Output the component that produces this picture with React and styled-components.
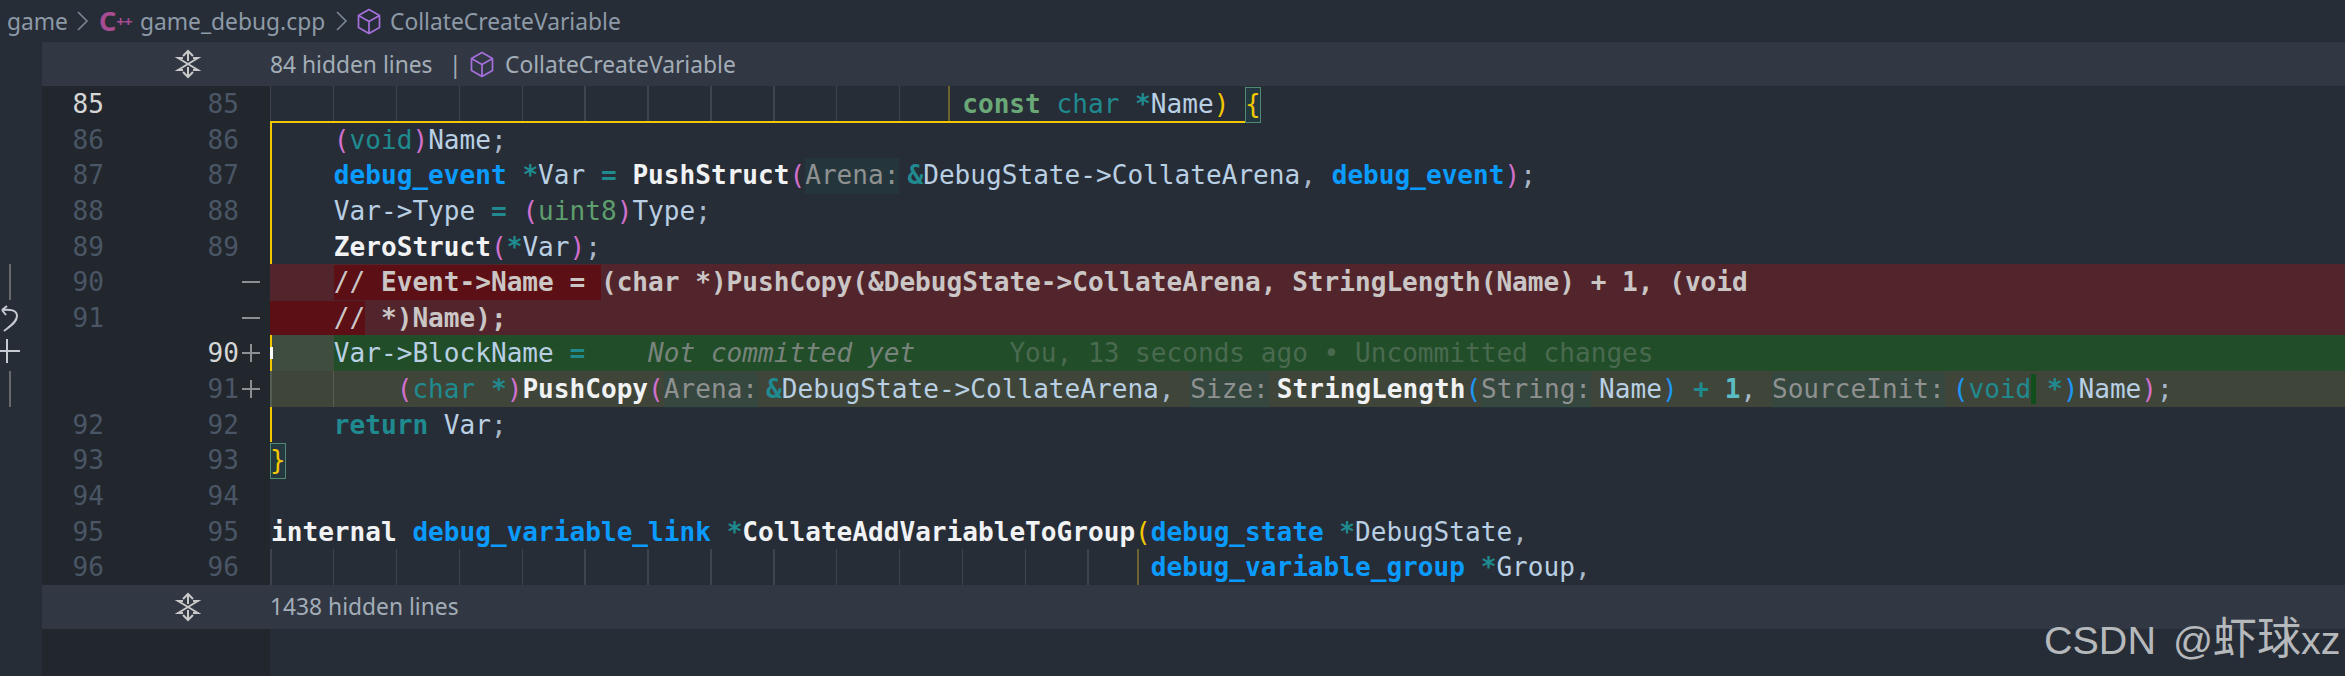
import React from "react";
import styled, { createGlobalStyle } from "styled-components";

const Global = createGlobalStyle`
  html, body { margin: 0; padding: 0; background: #272d36; }
  #root { width: 2345px; height: 676px; }
`;

const CHAR = 15.72;
const STEP = CHAR * 4;
const ROW = 35.64;
const MONO = `"DejaVu Sans Mono", "Liberation Mono", monospace`;
const SANS = `"Noto Sans", "Open Sans", sans-serif`;

const Page = styled.div`
  position: relative;
  width: 2345px;
  height: 676px;
  overflow: hidden;
  display: flex;
  flex-direction: column;
  background: #272d36;
`;

const Breadcrumb = styled.nav`
  height: 42px;
  display: flex;
  align-items: center;
  padding-left: 7px;
  font: 400 22.8px ${SANS};
  color: #8d9aa8;
  white-space: pre;
`;
const Crumb = styled.span`
  display: inline-block;
  width: ${(p) => p.$w}px;
`;
const Chev = styled.svg`
  width: 12px;
  height: 22px;
  margin: 0 ${(p) => p.$r}px 0 ${(p) => p.$l}px;
  fill: none;
  stroke: #7a8797;
  stroke-width: 1.6;
`;
const CppIcon = styled.span`
  display: inline-block;
  width: 41px;
  color: #a74b93;
  font: 700 27px ${SANS};
  line-height: 42px;
`;
const CppPlus = styled.span`
  font-size: 15px;
  vertical-align: 4px;
  letter-spacing: -1px;
`;
const Cube = styled.svg`
  width: 24px;
  height: 27px;
  margin-right: ${(p) => p.$r}px;
  fill: none;
  stroke: #a56fdc;
  stroke-width: 1.7;
  stroke-linejoin: round;
  flex: none;
`;

const FoldBar = styled.div`
  height: 44px;
  display: flex;
  align-items: center;
`;
const FoldBody = styled.div`
  flex: 1;
  margin-left: 42px;
  height: 44px;
  background: #323843;
  display: flex;
  align-items: center;
  font: 400 22.8px ${SANS};
  color: #a3adb8;
  white-space: pre;
`;
const FoldGutter = styled.div`
  width: 228px;
  padding-left: 133px;
  box-sizing: border-box;
  flex: none;
  display: flex;
`;
const FoldIcon = styled.svg`
  width: 26px;
  height: 30px;
  fill: none;
  stroke: #c9c9c9;
  stroke-width: 2;
`;
const FoldLabel = styled.span`
  display: inline-block;
  width: ${(p) => p.$w}px;
`;

const Lines = styled.div`
  display: flex;
  flex-direction: column;
`;
const RowBox = styled.div`
  height: ${ROW}px;
  display: flex;
  flex: none;
`;
const Rail = styled.div`
  width: 42px;
  flex: none;
  display: flex;
  align-items: center;
`;
const RailBar = styled.span`
  width: 2px;
  height: 100%;
  margin-left: 9px;
  background: #68696b;
`;
const RailIcon = styled.svg`
  width: 20px;
  height: 28px;
  fill: none;
  stroke: #c6cbd1;
  stroke-width: 2;
`;
const Gutter = styled.div`
  width: 228px;
  flex: none;
  display: grid;
  grid-template-columns: 62px 135px 31px;
  background: #22262d;
  font: 400 26.1px/${ROW}px ${MONO};
  color: #4a5666;
  text-align: right;
`;
const Num = styled.span`
  color: ${(p) => (p.$on ? "#d5d6d6" : "#4a5666")};
  position: relative;
  top: 1px;
`;
const Sign = styled.span`
  display: flex;
  align-items: center;
  padding-left: 2px;
`;
const SignIcon = styled.svg`
  width: 20px;
  height: 20px;
  fill: none;
  stroke: #8d8f92;
  stroke-width: 2;
`;

const backgrounds = {
  none: "transparent",
  removed: "#52252c",
  added: "#214d29",
  changed: "#3f4539",
};

const Code = styled.div`
  position: relative;
  flex: 1;
  min-width: 0;
  padding-left: 1px;
  font: 400 26.1px/${ROW}px ${MONO};
  color: #b9cfe3;
  white-space: pre;
  background: ${(p) => backgrounds[p.$bg || "none"]};
  box-shadow: ${(p) => (p.$scope ? "inset 2px 0 0 #f2c700" : "none")};
`;
const Guides = styled.span`
  position: absolute;
  left: 0;
  top: 0;
  bottom: 0;
  width: ${(p) => p.$n * STEP}px;
  background: repeating-linear-gradient(90deg, ${(p) => p.$color || "#3d444e"} 0 1.5px, transparent 1.5px ${STEP}px);
`;
const ScopeGuide = styled.span`
  position: absolute;
  left: ${(p) => p.$x}px;
  top: 0;
  bottom: 0;
  width: 1.5px;
  background: #6c6330;
`;
const ScopeTop = styled.span`
  position: absolute;
  left: 0;
  bottom: -1px;
  width: 977px;
  height: 2px;
  background: #f2c700;
`;
const AddedMargin = styled.span`
  position: absolute;
  left: 0;
  top: 0;
  bottom: 0;
  width: ${STEP + 1}px;
  background: #3f4d3f;
  box-shadow: inset 2px 0 0 #f2c700;
`;
const Caret = styled.span`
  position: absolute;
  left: 0;
  top: 12px;
  height: 12px;
  width: 3px;
  background: #fff;
`;
const LineText = styled.span`
  position: relative;
  top: 1px;
`;
const Dark = styled.span`
  background: #5c0f14;
  display: inline-block;
  ${(p) => p.$flush && "margin-left: -1px; padding-left: 1px;"}
`;
const Removed = styled.span`
  font-weight: 700;
  color: #cbc6c6;
`;
const Slash = styled.span`
  font-weight: 400;
`;
const Fn = styled.span`
  font-weight: 700;
  color: #f1f2f4;
`;
const Ty = styled.span`
  font-weight: 700;
  color: #0a9bff;
`;
const Kw = styled.span`
  font-weight: 700;
  color: ${(p) => (p.$green ? "#6aa878" : "#1f8a8f")};
`;
const Prim = styled.span`
  color: ${(p) => (p.$green ? "#5d9e6c" : "#1f8a8f")};
`;
const Op = styled.span`
  font-weight: 700;
  color: ${(p) => (p.$bright ? "#5cbcc4" : "#1f8a8f")};
`;
const Par = styled.span`
  color: ${(p) => ({ pink: "#d070cc", yellow: "#f2c700", blue: "#1e96f5" }[p.$c])};
`;
const Punct = styled.span`
  color: #a9b9c9;
`;
const Hint = styled.span`
  display: inline-block;
  margin-right: 8px;
  background: rgba(30, 75, 75, 0.3);
  color: #8f9090;
`;
const Match = styled.span`
  display: inline-block;
  vertical-align: top;
  height: ${ROW}px;
  box-sizing: border-box;
  box-shadow: inset 0 0 0 1px #4f8a72;
  background: #23383f;
  color: #f2c700;
  margin-left: ${(p) => p.$shift || 0}px;
`;
const Gap = styled.span`
  background: linear-gradient(90deg, #0e4f1c 5px, transparent 5px);
`;
const Ghost = styled.span`
  font-style: italic;
  color: #77837b;
`;
const Blame = styled.span`
  color: #4a6a50;
`;
const Rest = styled.div`
  flex: 1;
  display: flex;
`;
const RestRail = styled.div`
  width: 42px;
`;
const RestGutter = styled.div`
  width: 228px;
  background: #22262d;
`;
const Watermark = styled.div`
  position: absolute;
  left: 2044px;
  top: 617px;
  font: 400 39.5px/1 "Liberation Sans", "Noto Sans CJK SC", sans-serif;
  word-spacing: 6px;
  color: #b6b9bc;
  white-space: pre;
`;
const WatermarkCjk = styled.span`
  font-size: 44px;
`;

const Chevron = ({ l, r }) => (
  <Chev $l={l} $r={r} viewBox="0 0 12 22">
    <polyline points="1,2 10,11 1,20" />
  </Chev>
);
const CubeIcon = ({ r }) => (
  <Cube $r={r} viewBox="0 0 24 27">
    <path d="M12 1.5 L22.5 7.5 V19.5 L12 25.5 L1.5 19.5 V7.5 Z" />
    <path d="M1.5 7.5 L12 13.5 L22.5 7.5 M12 13.5 V25.5" />
  </Cube>
);
const UnfoldIcon = () => (
  <FoldIcon viewBox="0 0 26 30">
    <path d="M8 7 L13 2 L18 7 M13 2 V12 M8 23 L13 28 L18 23 M13 28 V18" />
    <path d="M8 9 H3 L23 21 H18 M18 9 H23 L3 21 H8" />
  </FoldIcon>
);
const Fold = ({ children }) => (
  <FoldBar>
    <FoldBody>
      <FoldGutter>
        <UnfoldIcon />
      </FoldGutter>
      {children}
    </FoldBody>
  </FoldBar>
);

const UndoIcon = () => (
  <RailIcon viewBox="0 0 20 28" style={{ marginTop: 2 }}>
    <path d="M4 26 C10 21 17 17 17 11 C17 5 10 4 2 5 M2 5 L7 1 M2 5 L6 10" />
  </RailIcon>
);
const PlusIcon = () => (
  <RailIcon viewBox="0 0 20 28" style={{ marginTop: -4 }}>
    <path d="M0 14 H20 M7 2 V26" />
  </RailIcon>
);
const Minus = () => (
  <SignIcon viewBox="0 0 20 20">
    <path d="M1 10 H19" />
  </SignIcon>
);
const Plus = () => (
  <SignIcon viewBox="0 0 20 20">
    <path d="M1 10 H19 M10 1 V19" />
  </SignIcon>
);

const Row = ({ rail, old, next, sign, oldOn, nextOn, bg, scope, children, over }) => (
  <RowBox>
    <Rail>{rail}</Rail>
    <Gutter>
      <Num $on={oldOn}>{old}</Num>
      <Num $on={nextOn}>{next}</Num>
      <Sign>{sign}</Sign>
    </Gutter>
    <Code $bg={bg} $scope={scope}>
      {over}
      <LineText>{children}</LineText>
    </Code>
  </RowBox>
);

export default function App() {
  return (
    <Page>
      <Global />
      <Breadcrumb>
        <Crumb $w={59}>game</Crumb>
        <Chevron l={11} r={10} />
        <CppIcon>
          C<CppPlus>++</CppPlus>
        </CppIcon>
        <Crumb $w={183}>game_debug.cpp</Crumb>
        <Chevron l={13} r={9} />
        <CubeIcon r={9} />
        <span>CollateCreateVariable</span>
      </Breadcrumb>

      <Fold>
        <FoldLabel $w={179}>84 hidden lines</FoldLabel>
        <FoldLabel $w={21}>|</FoldLabel>
        <CubeIcon r={11} />
        <span>CollateCreateVariable</span>
      </Fold>

      <Lines>
        <Row
          old="85"
          next="85"
          oldOn
          over={
            <>
              <Guides $n={11} />
              <ScopeGuide $x={678} />
              <ScopeTop />
            </>
          }
        >
          {" ".repeat(44)}
          <Kw $green>const</Kw> <Prim>char</Prim> <Op>*</Op>Name<Par $c="yellow">)</Par> <Match>{"{"}</Match>
        </Row>
        <Row old="86" next="86" scope>
          {"    "}
          <Par $c="pink">(</Par>
          <Prim>void</Prim>
          <Par $c="pink">)</Par>Name<Punct>;</Punct>
        </Row>
        <Row old="87" next="87" scope>
          {"    "}
          <Ty>debug_event</Ty> <Op>*</Op>Var <Op>=</Op> <Fn>PushStruct</Fn>
          <Par $c="pink">(</Par>
          <Hint>Arena:</Hint>
          <Op>&amp;</Op>DebugState-&gt;CollateArena<Punct>,</Punct> <Ty>debug_event</Ty>
          <Par $c="pink">)</Par>
          <Punct>;</Punct>
        </Row>
        <Row old="88" next="88" scope>
          {"    "}Var-&gt;Type <Op>=</Op> <Par $c="pink">(</Par>
          <Prim $green>uint8</Prim>
          <Par $c="pink">)</Par>Type<Punct>;</Punct>
        </Row>
        <Row old="89" next="89" scope>
          {"    "}
          <Fn>ZeroStruct</Fn>
          <Par $c="pink">(</Par>
          <Op>*</Op>Var<Par $c="pink">)</Par>
          <Punct>;</Punct>
        </Row>
        <Row old="90" sign={<Minus />} bg="removed" rail={<RailBar />}>
          <Removed>
            {"    "}
            <Dark>
              <Slash>//</Slash> Event-&gt;Name ={" "}
            </Dark>
            (char *)PushCopy(&amp;DebugState-&gt;CollateArena, StringLength(Name) + 1, (void
          </Removed>
        </Row>
        <Row old="91" sign={<Minus />} bg="removed" rail={<UndoIcon />}>
          <Removed>
            <Dark $flush>
              {"    "}
              <Slash>//</Slash>
            </Dark>
            {" "}*)Name);
          </Removed>
        </Row>
        <Row
          next="90"
          nextOn
          sign={<Plus />}
          bg="added"
          rail={<PlusIcon />}
          over={
            <>
              <AddedMargin />
              <Caret />
            </>
          }
        >
          {"    "}Var-&gt;BlockName <Op>=</Op>
          {"    "}
          <Ghost>Not committed yet</Ghost>
          {"      "}
          <Blame>You, 13 seconds ago • Uncommitted changes</Blame>
        </Row>
        <Row
          next="91"
          sign={<Plus />}
          bg="changed"
          scope
          rail={<RailBar />}
          over={<Guides $n={2} $color="#555c50" />}
        >
          {"        "}
          <Par $c="pink">(</Par>
          <Prim>char</Prim> <Op>*</Op>
          <Par $c="pink">)</Par>
          <Fn>PushCopy</Fn>
          <Par $c="pink">(</Par>
          <Hint>Arena:</Hint>
          <Op>&amp;</Op>DebugState-&gt;CollateArena<Punct>,</Punct> <Hint>Size:</Hint>
          <Fn>StringLength</Fn>
          <Par $c="blue">(</Par>
          <Hint>String:</Hint>Name<Par $c="blue">)</Par> <Op>+</Op> <Op $bright>1</Op>
          <Punct>,</Punct> <Hint>SourceInit:</Hint>
          <Par $c="blue">(</Par>
          <Prim>void</Prim>
          <Gap> </Gap>
          <Op>*</Op>
          <Par $c="blue">)</Par>Name<Par $c="pink">)</Par>
          <Punct>;</Punct>
        </Row>
        <Row old="92" next="92" scope>
          {"    "}
          <Kw>return</Kw> Var<Punct>;</Punct>
        </Row>
        <Row old="93" next="93">
          <Match $shift={-1}>{"}"}</Match>
        </Row>
        <Row old="94" next="94" />
        <Row old="95" next="95">
          <Fn>internal</Fn> <Ty>debug_variable_link</Ty> <Op>*</Op>
          <Fn>CollateAddVariableToGroup</Fn>
          <Par $c="yellow">(</Par>
          <Ty>debug_state</Ty> <Op>*</Op>DebugState<Punct>,</Punct>
        </Row>
        <Row
          old="96"
          next="96"
          over={
            <>
              <Guides $n={14} />
              <ScopeGuide $x={867} />
            </>
          }
        >
          {" ".repeat(56)}
          <Ty>debug_variable_group</Ty> <Op>*</Op>Group<Punct>,</Punct>
        </Row>
      </Lines>

      <Fold>
        <span>1438 hidden lines</span>
      </Fold>

      <Rest>
        <RestRail />
        <RestGutter />
      </Rest>
      <Watermark>
        CSDN @<WatermarkCjk>虾球</WatermarkCjk>xz
      </Watermark>
    </Page>
  );
}
